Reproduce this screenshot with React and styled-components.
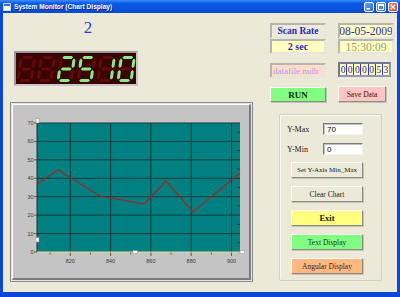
import React from "react";
import styled, { createGlobalStyle } from "styled-components";

const GlobalStyle = createGlobalStyle`
  html, body {
    margin: 0;
    padding: 0;
    background: #ece9d8;
    overflow: hidden;
  }
  * { box-sizing: border-box; }
`;

const Window = styled.div`
  width: 400px;
  height: 297px;
  display: flex;
  flex-direction: column;
  background: #0a46d8;
`;

const TitleBar = styled.div`
  height: 13px;
  display: flex;
  align-items: center;
  padding: 0 2px 0 3px;
  background: linear-gradient(#3d8df6 0%, #0b5be8 25%, #0652dc 70%, #0a48cc 100%);
`;

const TitleText = styled.span`
  margin-left: 3px;
  font-family: "Liberation Sans", Arial, sans-serif;
  font-weight: bold;
  font-size: 6.6px;
  color: #fff;
  text-shadow: 1px 1px 0 #0a2a8a;
  flex: 1;
  white-space: nowrap;
`;

const WinButtons = styled.div`
  display: flex;
  gap: 2px;
`;

const WinBtn = styled.div`
  width: 10px;
  height: 10px;
  border: 1px solid #fff;
  border-radius: 2px;
  background: ${(p) =>
    p.$close
      ? "linear-gradient(135deg, #f08a6a, #d8421c)"
      : "linear-gradient(135deg, #6aa4fa, #2a66e8)"};
  display: flex;
  align-items: center;
  justify-content: center;
`;

const Body = styled.div`
  flex: 1;
  margin: 0 3px 5px 3px;
  background: #ece9d8;
  display: flex;
  flex-direction: column;
`;

const TopRow = styled.div`
  height: 89px;
  display: flex;
`;

const LeftCol = styled.div`
  width: 135px;
  padding-left: 11px;
  display: flex;
  flex-direction: column;
`;

const BigNumber = styled.div`
  margin-top: 6px;
  padding-left: 24px;
  height: 17px;
  line-height: 17px;
  text-align: center;
  font-family: "Liberation Serif", "Times New Roman", serif;
  font-size: 17px;
  color: #3a3ad8;
`;

const LedPanel = styled.div`
  margin-top: 15px;
  width: 124px;
  height: 35px;
  border: 2px solid;
  border-color: #9a9a9a #c8c8c8 #c8c8c8 #9a9a9a;
  background: #3a0202;
  display: flex;
  align-items: center;
`;

const InfoCols = styled.div`
  margin-left: auto;
  margin-right: 3px;
  margin-top: 10px;
  display: flex;
  gap: 12px;
`;

const Stack = styled.div`
  width: 56px;
  display: flex;
  flex-direction: column;
`;

const InfoBox = styled.div`
  height: ${(p) => p.$h || 15}px;
  width: ${(p) => p.$w || 56}px;
  margin-top: ${(p) => p.$mt || 0}px;
  background: ${(p) => p.$bg || "#ece9d8"};
  border: 2px solid;
  border-color: #b6b6ae #e6e6de #e6e6de #b6b6ae;
  display: flex;
  align-items: center;
  justify-content: ${(p) => (p.$left ? "flex-start" : "center")};
  padding-left: ${(p) => (p.$left ? 1 : 0)}px;
  font-family: "Liberation Serif", "Times New Roman", serif;
  font-size: ${(p) => p.$fs || 10}px;
  font-weight: ${(p) => (p.$bold ? "bold" : "normal")};
  color: ${(p) => p.$color || "#2a2ab8"};
  white-space: nowrap;
  overflow: hidden;
`;

const Counter = styled.div`
  margin-top: 8px;
  width: 53px;
  height: 15px;
  border: 2px solid;
  border-color: #6c7894 #8e9ab4 #8e9ab4 #6c7894;
  display: flex;
  background: #ffffc0;
`;

const CounterCell = styled.span`
  flex: 1;
  border-right: 1px solid #3a3ab0;
  display: flex;
  align-items: center;
  justify-content: center;
  font-family: "Liberation Serif", "Times New Roman", serif;
  font-size: 9.5px;
  color: #1e1eb0;
  &:last-child { border-right: none; }
`;

const Button = styled.div`
  height: ${(p) => p.$h || 16}px;
  width: ${(p) => p.$w || 72}px;
  margin-top: ${(p) => p.$mt || 0}px;
  background: ${(p) => p.$bg || "#ece9d8"};
  border: 1px solid;
  border-color: #fafaf6 #8c8c84 #8c8c84 #fafaf6;
  box-shadow: 1px 1px 0 #c4c4bc;
  display: flex;
  align-items: center;
  justify-content: center;
  font-family: "Liberation Serif", "Times New Roman", serif;
  font-size: ${(p) => p.$fs || 7.5}px;
  font-weight: ${(p) => (p.$bold ? "bold" : "normal")};
  color: ${(p) => p.$color || "#1a1a1a"};
  white-space: nowrap;
`;

const BottomRow = styled.div`
  display: flex;
  padding-left: 7px;
`;

const ChartFrame = styled.div`
  width: 243px;
  height: 180px;
  border: 1px solid #8a8a8a;
  padding: 1px;
  background: #e4e4e4;
  display: flex;
`;

const ChartInner = styled.div`
  flex: 1;
  border: 1px solid;
  border-width: 1px 2px 2px 1px;
  border-color: #ffffff #7c7c7c #7c7c7c #ffffff;
  background: #c4c4c4;
  display: flex;
`;

const GroupBox = styled.div`
  margin-left: 26px;
  margin-top: 12px;
  width: 103px;
  height: 167px;
  border: 1px solid #cfcfc2;
  border-radius: 2px;
  box-shadow: inset 1px 1px 0 #f8f8f4;
  padding: 8px 0 0 7px;
  display: flex;
  flex-direction: column;
`;

const FieldRow = styled.div`
  height: 12px;
  margin-bottom: 8px;
  display: flex;
  align-items: center;
`;

const FieldLabel = styled.span`
  width: 36px;
  font-family: "Liberation Serif", "Times New Roman", serif;
  font-size: 8px;
  color: #1a1a1a;
`;

const FieldInput = styled.div`
  width: 40px;
  height: 12px;
  background: #fff;
  border: 1px solid;
  border-color: #7a7a7a #f4f4f4 #f4f4f4 #7a7a7a;
  box-shadow: inset 1px 1px 0 #c0c0c0;
  padding-left: 3px;
  display: flex;
  align-items: center;
  font-family: "Liberation Sans", Arial, sans-serif;
  font-size: 8px;
  color: #000;
`;

const ButtonStack = styled.div`
  margin-top: -1px;
  padding-left: 4px;
  display: flex;
  flex-direction: column;
  gap: 8px;
`;

/* ---- seven segment digits ---- */
const hseg = (x1, x2, c) =>
  `${x1},${c} ${x1 + 1.5},${c - 1.5} ${x2 - 1.5},${c - 1.5} ${x2},${c} ${x2 - 1.5},${c + 1.5} ${x1 + 1.5},${c + 1.5}`;
const vseg = (cx, y1, y2) =>
  `${cx},${y1} ${cx + 1.5},${y1 + 1.5} ${cx + 1.5},${y2 - 1.5} ${cx},${y2} ${cx - 1.5},${y2 - 1.5} ${cx - 1.5},${y1 + 1.5}`;

const SEGMENTS = {
  a: hseg(2.6, 13.4, 1.5),
  g: hseg(2.6, 13.4, 13),
  d: hseg(2.6, 13.4, 24.5),
  f: vseg(1.5, 2.6, 12),
  b: vseg(14.5, 2.6, 12),
  e: vseg(1.5, 14, 23.4),
  c: vseg(14.5, 14, 23.4),
};

const DIGITS = { "2": "abged", "5": "afgcd", "1": "bc", "0": "abcdef", " ": "" };

const LedDigit = ({ ch }) => {
  const on = DIGITS[ch] || "";
  return (
    <svg width="20" height="28" viewBox="0 0 20 28">
      <g transform="translate(4,1) skewX(-8)">
        {Object.keys(SEGMENTS).map((k) => (
          <polygon
            key={k}
            points={SEGMENTS[k]}
            fill={on.includes(k) ? "#86ec86" : "#640808"}
          />
        ))}
      </g>
    </svg>
  );
};

/* ---- chart ---- */
const yPos = (v) => 252 - (v * 129) / 70;
const xPos = (v) => 70.3 + ((v - 820) * 40.3) / 20;
const series = [
  [37, 184],
  [58, 170],
  [100, 196],
  [144, 204],
  [166, 181],
  [193, 212],
  [240, 173],
];

const Chart = () => {
  const yVals = [0, 10, 20, 30, 40, 50, 60, 70];
  const xVals = [820, 840, 860, 880, 900];
  const grid = "#163a3a";
  return (
    <svg width="236" height="173" viewBox="13 105 236 173">
      <rect x="37" y="123" width="203" height="129" fill="#008080" />
      {yVals.map((v) => (
        <g key={v}>
          {v > 0 && (
            <line x1="37" x2="240" y1={yPos(v)} y2={yPos(v)} stroke={grid} strokeWidth="1" />
          )}
          <line x1="34" x2="37" y1={yPos(v)} y2={yPos(v)} stroke="#444" strokeWidth="0.8" />
          <text
            x="33.5"
            y={yPos(v) + 2}
            fontSize="5.5"
            textAnchor="end"
            fill="#3a3a3a"
            fontFamily="Liberation Sans, Arial, sans-serif"
          >
            {v}
          </text>
          {v < 70 && (
            <line
              x1="237"
              x2="240"
              y1={yPos(v + 5)}
              y2={yPos(v + 5)}
              stroke={grid}
              strokeWidth="0.8"
            />
          )}
        </g>
      ))}
      {xVals.map((v) => (
        <g key={v}>
          <line x1={xPos(v)} x2={xPos(v)} y1="123" y2="252" stroke={grid} strokeWidth="1" />
          <line x1={xPos(v)} x2={xPos(v)} y1="252" y2="256" stroke="#444" strokeWidth="0.8" />
          <line
            x1={xPos(v - 10)}
            x2={xPos(v - 10)}
            y1="252"
            y2="254.5"
            stroke="#444"
            strokeWidth="0.8"
          />
          <text
            x={xPos(v)}
            y="263"
            fontSize="5.5"
            textAnchor="middle"
            fill="#3a3a3a"
            fontFamily="Liberation Sans, Arial, sans-serif"
          >
            {v}
          </text>
        </g>
      ))}
      <line x1="37" x2="37" y1="123" y2="252" stroke="#1e2e2e" strokeWidth="1" />
      <line x1="37" x2="240" y1="252" y2="252" stroke="#dede8a" strokeWidth="1.2" />
      <polyline
        points={series.map((p) => p.join(",")).join(" ")}
        fill="none"
        stroke="#a42424"
        strokeWidth="1.2"
      />
      <rect x="36" y="118.5" width="3" height="4.5" fill="#fff" stroke="#888" strokeWidth="0.5" />
      <rect x="36" y="237.5" width="3" height="4.5" fill="#fff" stroke="#888" strokeWidth="0.5" />
      <rect x="133" y="250.5" width="4.5" height="3" fill="#fff" stroke="#888" strokeWidth="0.5" />
      <rect x="240" y="250.5" width="4.5" height="3" fill="#fff" stroke="#888" strokeWidth="0.5" />
    </svg>
  );
};

const AppIcon = () => (
  <svg width="8" height="8" viewBox="0 0 8 8">
    <rect x="0.5" y="0.5" width="7" height="7" fill="#fff" stroke="#c8d8f0" />
    <rect x="1" y="1" width="6" height="2" fill="#3a6ad8" />
  </svg>
);

export default function App() {
  return (
    <>
      <GlobalStyle />
      <Window>
        <TitleBar>
          <AppIcon />
          <TitleText>System Monitor (Chart Display)</TitleText>
          <WinButtons>
            <WinBtn>
              <svg width="6" height="6" viewBox="0 0 6 6">
                <rect x="0.5" y="4" width="3.5" height="1.5" fill="#fff" />
              </svg>
            </WinBtn>
            <WinBtn>
              <svg width="6" height="6" viewBox="0 0 6 6">
                <rect x="0.5" y="0.5" width="5" height="5" fill="none" stroke="#fff" strokeWidth="1" />
                <rect x="0.5" y="0.5" width="5" height="1.5" fill="#fff" />
              </svg>
            </WinBtn>
            <WinBtn $close>
              <svg width="6" height="6" viewBox="0 0 6 6">
                <path d="M0.8 0.8 L5.2 5.2 M5.2 0.8 L0.8 5.2" stroke="#fff" strokeWidth="1.3" />
              </svg>
            </WinBtn>
          </WinButtons>
        </TitleBar>
        <Body>
          <TopRow>
            <LeftCol>
              <BigNumber>2</BigNumber>
              <LedPanel>
                {[" ", " ", "2", "5", "1", "0"].map((d, i) => (
                  <LedDigit key={i} ch={d} />
                ))}
              </LedPanel>
            </LeftCol>
            <InfoCols>
              <Stack>
                <InfoBox $h={16} $bold $fs={9.5}>Scan Rate</InfoBox>
                <InfoBox $h={15} $bg="#ffffc0" $bold $fs={10}>2 sec</InfoBox>
                <InfoBox $h={15} $mt={9} $bg="#ffdcc8" $fs={9} $color="#a4a4f4" $left>
                  datafile.mdb
                </InfoBox>
                <Button $mt={9} $h={15} $w={56} $bg="#80ff80" $bold $fs={9} $color="#103010">
                  RUN
                </Button>
              </Stack>
              <Stack>
                <InfoBox $h={16} $bg="#ffffc0" $fs={11.5}>08-05-2009</InfoBox>
                <InfoBox $h={15} $bg="#ffffc0" $fs={11.5} $color="#9c9c7c">15:30:09</InfoBox>
                <Counter>
                  {"0000053".split("").map((c, i) => (
                    <CounterCell key={i}>{c}</CounterCell>
                  ))}
                </Counter>
                <Button $mt={9} $h={16} $w={48} $bg="#ffc4c4" $color="#3a1010">
                  Save Data
                </Button>
              </Stack>
            </InfoCols>
          </TopRow>
          <BottomRow>
            <ChartFrame>
              <ChartInner>
                <Chart />
              </ChartInner>
            </ChartFrame>
            <GroupBox>
              <FieldRow>
                <FieldLabel>Y-Max</FieldLabel>
                <FieldInput>70</FieldInput>
              </FieldRow>
              <FieldRow>
                <FieldLabel>Y-Min</FieldLabel>
                <FieldInput>0</FieldInput>
              </FieldRow>
              <ButtonStack>
                <Button $fs={7}>Set Y-Axis Min_Max</Button>
                <Button>Clear Chart</Button>
                <Button $bg="#ffff80" $bold $fs={8.5}>Exit</Button>
                <Button $bg="#80ff80" $color="#183818">Text Display</Button>
                <Button $bg="#ffb880" $color="#3a2010">Angular Display</Button>
              </ButtonStack>
            </GroupBox>
          </BottomRow>
        </Body>
      </Window>
    </>
  );
}
